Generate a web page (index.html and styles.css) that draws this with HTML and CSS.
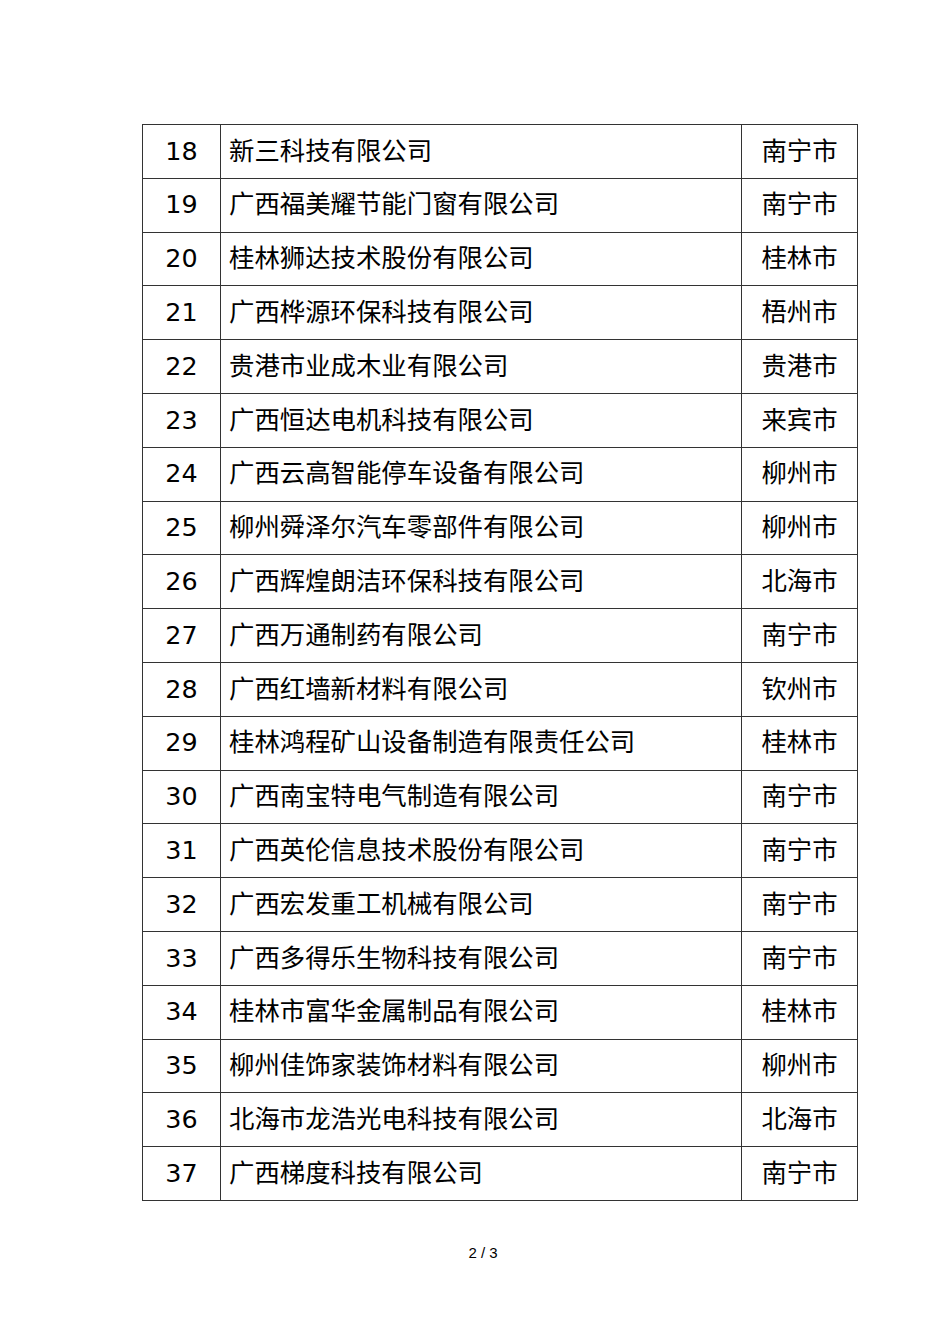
FILE: index.html
```html
<!DOCTYPE html>
<html lang="zh">
<head>
<meta charset="utf-8">
<link rel="stylesheet" href="styles.css">
</head>
<body>
<div class="page">
<table class="list">
<colgroup><col class="c-no"><col class="c-name"><col class="c-city"></colgroup>
<tbody>
<tr><td class="no">18</td><td class="name">新三科技有限公司</td><td class="city">南宁市</td></tr>
<tr><td class="no">19</td><td class="name">广西福美耀节能门窗有限公司</td><td class="city">南宁市</td></tr>
<tr><td class="no">20</td><td class="name">桂林狮达技术股份有限公司</td><td class="city">桂林市</td></tr>
<tr><td class="no">21</td><td class="name">广西桦源环保科技有限公司</td><td class="city">梧州市</td></tr>
<tr><td class="no">22</td><td class="name">贵港市业成木业有限公司</td><td class="city">贵港市</td></tr>
<tr><td class="no">23</td><td class="name">广西恒达电机科技有限公司</td><td class="city">来宾市</td></tr>
<tr><td class="no">24</td><td class="name">广西云高智能停车设备有限公司</td><td class="city">柳州市</td></tr>
<tr><td class="no">25</td><td class="name">柳州舜泽尔汽车零部件有限公司</td><td class="city">柳州市</td></tr>
<tr><td class="no">26</td><td class="name">广西辉煌朗洁环保科技有限公司</td><td class="city">北海市</td></tr>
<tr><td class="no">27</td><td class="name">广西万通制药有限公司</td><td class="city">南宁市</td></tr>
<tr><td class="no">28</td><td class="name">广西红墙新材料有限公司</td><td class="city">钦州市</td></tr>
<tr><td class="no">29</td><td class="name">桂林鸿程矿山设备制造有限责任公司</td><td class="city">桂林市</td></tr>
<tr><td class="no">30</td><td class="name">广西南宝特电气制造有限公司</td><td class="city">南宁市</td></tr>
<tr><td class="no">31</td><td class="name">广西英伦信息技术股份有限公司</td><td class="city">南宁市</td></tr>
<tr><td class="no">32</td><td class="name">广西宏发重工机械有限公司</td><td class="city">南宁市</td></tr>
<tr><td class="no">33</td><td class="name">广西多得乐生物科技有限公司</td><td class="city">南宁市</td></tr>
<tr><td class="no">34</td><td class="name">桂林市富华金属制品有限公司</td><td class="city">桂林市</td></tr>
<tr><td class="no">35</td><td class="name">柳州佳饰家装饰材料有限公司</td><td class="city">柳州市</td></tr>
<tr><td class="no">36</td><td class="name">北海市龙浩光电科技有限公司</td><td class="city">北海市</td></tr>
<tr><td class="no">37</td><td class="name">广西梯度科技有限公司</td><td class="city">南宁市</td></tr>
</tbody>
</table>
<div class="footer">2 / 3</div>
</div>
</body>
</html>
```
FILE: styles.css
```css
html, body {
  margin: 0;
  padding: 0;
  background: #ffffff;
}
.page {
  width: 950px;
  padding-top: 124px;
}
.list {
  margin-left: 142px;
  width: 715px;
  border-collapse: collapse;
  table-layout: fixed;
  font-family: "DejaVu Sans", "Noto Sans CJK SC", sans-serif;
  font-size: 25.4px;
  color: #000;
}
.c-no { width: 78px; }
.c-name { width: 521px; }
.c-city { width: 116px; }
.list td {
  border: 1px solid #333;
  height: 52.8px;
  padding: 0;
  vertical-align: middle;
  white-space: nowrap;
  line-height: 1;
}
.list td.no { text-align: center; }
.list td.name { padding-left: 8px; }
.list td.city { text-align: center; }
.footer {
  margin-top: 43px;
  padding-left: 16px;
  text-align: center;
  font-family: "Liberation Sans", Arial, sans-serif;
  font-size: 15px;
  color: #000;
}
```
